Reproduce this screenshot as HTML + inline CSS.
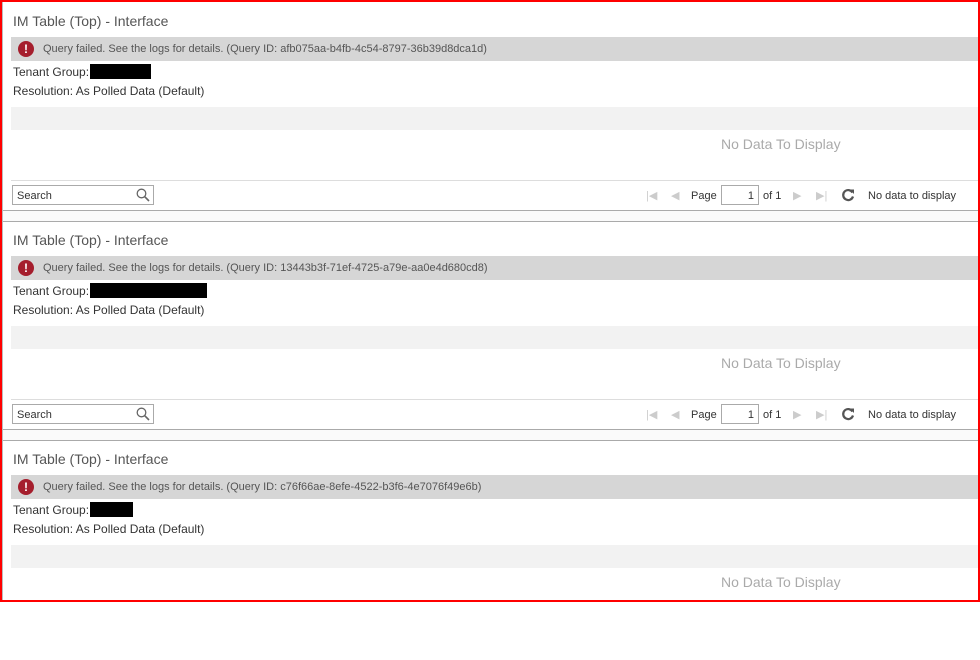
<!DOCTYPE html>
<html><head><meta charset="utf-8"><style>
*{margin:0;padding:0;box-sizing:border-box}
body{width:980px;height:602px;position:relative;overflow:hidden;background:#fff;font-family:"Liberation Sans",Arial,sans-serif;color:#333}
.frame{position:absolute;left:0;top:0;width:980px;height:602px;border:2px solid #f00;z-index:10;pointer-events:none}
.vline{position:absolute;left:2px;top:0;width:1px;height:602px;background:#bbb}
.p{position:absolute;left:0;width:980px;height:219px}
.title{position:absolute;left:13px;top:10px;font-size:14px;color:#555}
.err{position:absolute;left:11px;top:34px;width:967px;height:24px;background:#d6d6d6;font-size:11px;color:#555;line-height:24px;padding-left:32px}
.err i{position:absolute;left:7px;top:4px;width:16px;height:16px;border-radius:50%;background:#a51e2d;color:#fff;font-style:normal;font-weight:bold;font-size:12px;line-height:16px;text-align:center}
.t{position:absolute;left:13px;font-size:12px;color:#333}
.blk{display:inline-block;background:#000;height:15px;vertical-align:-3px;margin-left:1px}
.band{position:absolute;left:11px;top:104px;width:967px;height:23px;background:#f2f2f2}
.nd{position:absolute;left:721px;top:133px;font-size:14px;color:#aaa}
.fl{position:absolute;left:11px;top:177px;width:967px;height:1px;background:#ddd}
.search{position:absolute;left:12px;top:182px;width:142px;height:20px;border:1px solid #aaa;font-size:11px;color:#333;line-height:20px;padding-left:4px}
.pg{position:absolute;top:183px;font-size:11px;color:#333;line-height:20px}
.pbox{position:absolute;left:721px;top:182px;width:38px;height:20px;border:1px solid #aaa;font-size:11px;text-align:right;padding-right:4px;line-height:20px}
.bl{position:absolute;left:3px;top:207px;width:975px;height:1px;background:#aaa}
.gap{position:absolute;left:3px;top:208px;width:975px;height:11px;background:#fafafa;border-bottom:1px solid #aaa}
.ic{position:absolute;top:183px;color:#ccc;font-size:11px;line-height:20px}
</style></head><body>
<div class="vline"></div>

<div class="p" style="top:3px">
<div class="title">IM Table (Top) - Interface</div>
<div class="err"><i>!</i>Query failed. See the logs for details. (Query ID: afb075aa-b4fb-4c54-8797-36b39d8dca1d)</div>
<div class="t" style="top:61px">Tenant Group:<span class="blk" style="width:61px"></span></div>
<div class="t" style="top:81px">Resolution: As Polled Data (Default)</div>
<div class="band"></div>
<div class="nd">No Data To Display</div>
<div class="fl"></div>
<div class="search">Search<svg style="position:absolute;right:3px;top:2px" width="14" height="14" viewBox="0 0 14 14"><circle cx="5.5" cy="5.5" r="4.3" fill="none" stroke="#666" stroke-width="1.3"/><path d="M8.6 8.6L13 13" stroke="#666" stroke-width="1.6"/></svg></div>
<div class="ic" style="left:646px">|◀</div><div class="ic" style="left:671px">◀</div>
<div class="pg" style="left:691px">Page</div><div class="pbox">1</div><div class="pg" style="left:763px">of 1</div>
<div class="ic" style="left:793px">▶</div><div class="ic" style="left:816px">▶|</div>
<svg style="position:absolute;left:841px;top:185px" width="14" height="14" viewBox="0 0 14 14"><path d="M11.5 4.5A5 5 0 1 0 12 8.5" fill="none" stroke="#555" stroke-width="2.2"/><path d="M8.5 1.5L13 1.5L13 6Z" fill="#555"/></svg>
<div class="pg" style="left:868px">No data to display</div>
<div class="bl"></div><div class="gap"></div>
</div>

<div class="p" style="top:222px">
<div class="title">IM Table (Top) - Interface</div>
<div class="err"><i>!</i>Query failed. See the logs for details. (Query ID: 13443b3f-71ef-4725-a79e-aa0e4d680cd8)</div>
<div class="t" style="top:61px">Tenant Group:<span class="blk" style="width:117px"></span></div>
<div class="t" style="top:81px">Resolution: As Polled Data (Default)</div>
<div class="band"></div>
<div class="nd">No Data To Display</div>
<div class="fl"></div>
<div class="search">Search<svg style="position:absolute;right:3px;top:2px" width="14" height="14" viewBox="0 0 14 14"><circle cx="5.5" cy="5.5" r="4.3" fill="none" stroke="#666" stroke-width="1.3"/><path d="M8.6 8.6L13 13" stroke="#666" stroke-width="1.6"/></svg></div>
<div class="ic" style="left:646px">|◀</div><div class="ic" style="left:671px">◀</div>
<div class="pg" style="left:691px">Page</div><div class="pbox">1</div><div class="pg" style="left:763px">of 1</div>
<div class="ic" style="left:793px">▶</div><div class="ic" style="left:816px">▶|</div>
<svg style="position:absolute;left:841px;top:185px" width="14" height="14" viewBox="0 0 14 14"><path d="M11.5 4.5A5 5 0 1 0 12 8.5" fill="none" stroke="#555" stroke-width="2.2"/><path d="M8.5 1.5L13 1.5L13 6Z" fill="#555"/></svg>
<div class="pg" style="left:868px">No data to display</div>
<div class="bl"></div><div class="gap"></div>
</div>

<div class="p" style="top:441px">
<div class="title">IM Table (Top) - Interface</div>
<div class="err"><i>!</i>Query failed. See the logs for details. (Query ID: c76f66ae-8efe-4522-b3f6-4e7076f49e6b)</div>
<div class="t" style="top:61px">Tenant Group:<span class="blk" style="width:43px"></span></div>
<div class="t" style="top:81px">Resolution: As Polled Data (Default)</div>
<div class="band"></div>
<div class="nd">No Data To Display</div>
</div>

<div class="frame"></div>
</body></html>
